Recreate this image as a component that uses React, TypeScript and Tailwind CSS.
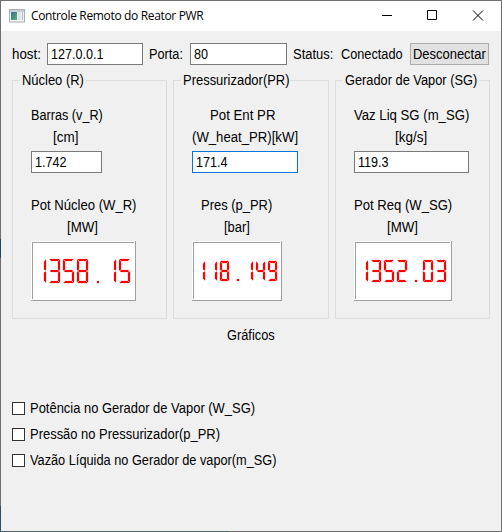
import type { ReactNode } from 'react';

const SEGMENTS: Record<string, string> = {
  '0': 'abcdef',
  '1': 'bc',
  '2': 'abged',
  '3': 'abgcd',
  '4': 'fgbc',
  '5': 'afgcd',
  '8': 'abcdefg',
  '9': 'abcdfg',
};

function segmentPoints(seg: string, x: number, w: number, h: number): string {
  const m = h / 2;
  const r = x + w;
  const shapes: Record<string, number[][]> = {
    a: [[x + 0.5, 0], [r - 0.5, 0], [r - 2.2, 2], [x + 2.2, 2]],
    d: [[x + 0.5, h], [r - 0.5, h], [r - 2.2, h - 2], [x + 2.2, h - 2]],
    g: [[x + 1, m], [x + 2, m - 1], [r - 2, m - 1], [r - 1, m], [r - 2, m + 1], [x + 2, m + 1]],
    b: [[r, 0.6], [r, m - 0.6], [r - 2, m - 1.4], [r - 2, 2.4]],
    c: [[r, m + 0.6], [r, h - 0.6], [r - 2, h - 2.4], [r - 2, m + 1.4]],
    f: [[x, 0.6], [x, m - 0.6], [x + 2, m - 1.4], [x + 2, 2.4]],
    e: [[x, m + 0.6], [x, h - 0.6], [x + 2, h - 2.4], [x + 2, m + 1.4]],
  };
  return shapes[seg].map((p) => p.join(',')).join(' ');
}

interface LcdProps {
  value: string;
  width: number;
  start: number;
  top: number;
  digit: number;
  height: number;
}

/* Sunken seven-segment read-out. */
function Lcd({ value, width, start, top, digit, height }: LcdProps) {
  const pitch = digit + 3;
  return (
    <svg width={width} height={60} className="mt-[3px] block shrink-0" role="img" aria-label={value}>
      <rect width={width} height={60} fill="#a0a0a0" />
      <rect width={width - 1} height={59} fill="#ffffff" />
      <rect x={1} y={1} width={width - 3} height={57} fill="#a0a0a0" />
      <rect x={2} y={2} width={width - 3} height={57} fill="#ffffff" />
      <g transform={`translate(${start} ${top})`} fill="#ff0000" stroke="#ff0000" strokeWidth="0.2">
        {value.split('').map((ch, i) =>
          ch === '.' ? (
            <rect key={i} x={i * pitch + Math.ceil(digit / 2)} y={height - 2} width={2} height={2} />
          ) : (
            SEGMENTS[ch].split('').map((s) => (
              <polygon key={`${i}${s}`} points={segmentPoints(s, i * pitch, digit, height)} />
            ))
          ),
        )}
      </g>
    </svg>
  );
}

/* Slightly condensed label text, as drawn by the native toolkit. */
function Txt({ children, scale = 'scale-x-[0.925]' }: { children: ReactNode; scale?: string }) {
  return <span className={`inline-block origin-left whitespace-nowrap ${scale}`}>{children}</span>;
}

function Row({ className = '', scale, children }: { className?: string; scale?: string; children: ReactNode }) {
  return (
    <div className={`h-[22px] whitespace-nowrap leading-[22px] ${className}`}>
      <Txt scale={scale}>{children}</Txt>
    </div>
  );
}

function Field({ value, className }: { value: string; className: string }) {
  return (
    <div className={`h-[22px] shrink-0 border bg-white px-[3px] leading-5 ${className}`}>
      <Txt scale="scale-x-[0.9]">{value}</Txt>
    </div>
  );
}

interface GroupProps {
  title: string;
  titleWidth: string;
  scale?: string;
  className: string;
  children: ReactNode;
}

function Group({ title, titleWidth, scale, className, children }: GroupProps) {
  return (
    <section className={`relative h-[239px] border border-[#dcdcdc] pl-[18px] pt-[23px] ${className}`}>
      <h2 className={`absolute -top-[10px] left-[7px] bg-[#f0f0f0] pl-[2px] leading-[18px] ${titleWidth}`}>
        <Txt scale={scale}>{title}</Txt>
      </h2>
      {children}
    </section>
  );
}

function Check({ label, scale }: { label: string; scale?: string }) {
  return (
    <label className="flex h-[26px] items-center gap-[5px]">
      <span className="h-[13px] w-[13px] border border-[#333333] bg-white" />
      <Txt scale={scale}>{label}</Txt>
    </label>
  );
}

export default function App() {
  return (
    <div className="relative flex h-[532px] w-[502px] flex-col overflow-hidden border border-[#6f6f6f] bg-[#f0f0f0] font-['Liberation_Sans',Arial,sans-serif] text-[14px] text-black">
      <header className="flex h-[30px] shrink-0 items-center bg-white pl-2">
        <svg width="16" height="14" viewBox="0 0 16 14" className="shrink-0">
          <defs>
            <linearGradient id="pane" x1="0" y1="0" x2="1" y2="1">
              <stop offset="0" stopColor="#3b6fa5" />
              <stop offset="0.5" stopColor="#46927f" />
              <stop offset="1" stopColor="#62b083" />
            </linearGradient>
          </defs>
          <rect x="0.5" y="0.5" width="15" height="12.5" fill="#f4f4f4" stroke="#a8adb2" />
          <rect x="1" y="1" width="14" height="2" fill="#c9ced3" />
          <rect x="2" y="3" width="6" height="8" fill="url(#pane)" />
          <rect x="9" y="3" width="3" height="8" fill="#dfe5e6" />
          <rect x="13" y="3" width="1" height="8" fill="#a9bcc4" />
        </svg>
        <h1 className="ml-[6px] whitespace-nowrap font-['Open_Sans','Noto_Sans',sans-serif] text-[12px] tracking-[-0.34px]">
          Controle Remoto do Reator PWR
        </h1>
        <svg width="120" height="30" viewBox="0 0 120 30" className="ml-auto shrink-0" fill="none" stroke="#000000">
          <path d="M1 14.5h10M46.500 9.500h9v9h-9z" />
          <path d="M92 9.500l10 10M102 9.500l-10 10" />
        </svg>
      </header>

      <div className="mt-3 flex h-[22px] shrink-0 items-center whitespace-nowrap pl-[11px]">
        <div className="w-[35px]"><Txt scale="scale-x-[0.95]">host:</Txt></div>
        <Field value="127.0.0.1" className="w-[96px] border-[#7a7a7a]" />
        <div className="ml-[6px] w-[41px]"><Txt scale="scale-x-[0.91]">Porta:</Txt></div>
        <Field value="80" className="w-[97px] border-[#7a7a7a]" />
        <div className="ml-[6px] w-[48px]"><Txt>Status:</Txt></div>
        <div className="w-[69px]"><Txt scale="scale-x-[0.91]">Conectado</Txt></div>
        <button className="h-[22px] w-[79px] border border-[#adadad] bg-[#e1e1e1] pl-[2px] text-left leading-5">
          <Txt>Desconectar</Txt>
        </button>
      </div>

      <main className="mt-[15px] flex shrink-0 gap-[6px] pl-[11px]">
        <Group title="Núcleo (R)" titleWidth="w-[66px]" className="w-[155px]">
          <Row scale="scale-x-[0.905]">Barras (v_R)</Row>
          <Row className="pl-[22px]" scale="scale-x-[0.96]">[cm]</Row>
          <Field value="1.742" className="mt-[3px] w-[71px] border-[#7a7a7a]" />
          <Row className="mt-[21px]" scale="scale-x-[0.935]">Pot Núcleo (W_R)</Row>
          <Row className="pl-[36px]" scale="scale-x-[0.95]">[MW]</Row>
          <Lcd value="1358.15" width={105} start={4} top={18} digit={11} height={24} />
        </Group>
        <Group title="Pressurizador(PR)" titleWidth="w-[110px]" className="w-[156px]">
          <Row className="pl-[18px]" scale="scale-x-[0.945]">Pot Ent PR</Row>
          <Row scale="scale-x-[0.94]">(W_heat_PR)[kW]</Row>
          <Field value="171.4" className="mt-[3px] w-[106px] border-[#0078d7]" />
          <Row className="mt-[21px] pl-[9px]">Pres (p_PR)</Row>
          <Row className="pl-[32px]">[bar]</Row>
          <Lcd value="118.149" width={90} start={4} top={20} digit={9} height={20} />
        </Group>
        <Group title="Gerador de Vapor (SG)" titleWidth="w-[136px]" scale="scale-x-[0.915]" className="w-[155px]">
          <Row scale="scale-x-[0.94]">Vaz Liq SG (m_SG)</Row>
          <Row className="pl-[41px]" scale="scale-x-[0.96]">[kg/s]</Row>
          <Field value="119.3" className="mt-[3px] w-[115px] border-[#7a7a7a]" />
          <Row className="mt-[21px]" scale="scale-x-[0.935]">Pot Req (W_SG)</Row>
          <Row className="pl-[33px]" scale="scale-x-[0.95]">[MW]</Row>
          <Lcd value="1352.03" width={98} start={4} top={19} digit={10} height={22} />
        </Group>
      </main>

      <Row className="mt-[5px] pl-[226px]" scale="scale-x-[0.915]">Gráficos</Row>

      <div className="mt-[49px] pl-[11px]">
        <Check label="Potência no Gerador de Vapor (W_SG)" />
        <Check label="Pressão no Pressurizador(p_PR)" />
        <Check label="Vazão Líquida no Gerador de vapor(m_SG)" scale="scale-x-[0.911]" />
      </div>

      {/* Desktop showing through the window's translucent outer edge. */}
      <div className="pointer-events-none fixed left-0 top-[239px] h-[19px] w-px bg-[#1f4468]" />
      <div className="pointer-events-none fixed left-0 top-[506px] h-[25px] w-px bg-[#2d4f68]" />
      <div className="pointer-events-none fixed bottom-0 left-0 h-px w-[229px] bg-[#4c6468]" />
    </div>
  );
}
